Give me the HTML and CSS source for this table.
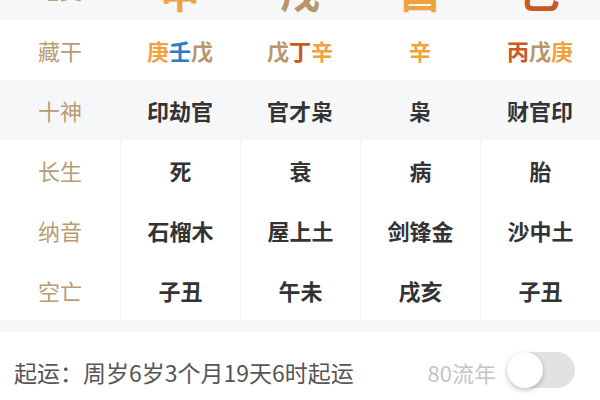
FILE: index.html
```html
<!DOCTYPE html>
<html lang="zh">
<head>
<meta charset="utf-8">
<link rel="stylesheet" href="styles.css">
</head>
<body>
<div class="page">
  <div class="row gray top">
    <div class="label">地支</div>
    <div class="cell big c-metal">申</div>
    <div class="cell big c-earth">戌</div>
    <div class="cell big c-metal">酉</div>
    <div class="cell big c-fire">巳</div>
  </div>
  <div class="row white">
    <div class="label">藏干</div>
    <div class="cell stems"><span class="c-metal">庚</span><span class="c-water">壬</span><span class="c-earth">戊</span></div>
    <div class="cell stems"><span class="c-earth">戊</span><span class="c-fire">丁</span><span class="c-metal">辛</span></div>
    <div class="cell stems"><span class="c-metal">辛</span></div>
    <div class="cell stems"><span class="c-fire">丙</span><span class="c-earth">戊</span><span class="c-metal">庚</span></div>
  </div>
  <div class="row gray">
    <div class="label">十神</div>
    <div class="cell">印劫官</div>
    <div class="cell">官才枭</div>
    <div class="cell">枭</div>
    <div class="cell">财官印</div>
  </div>
  <div class="block">
    <div class="row lined">
      <div class="label">长生</div>
      <div class="cell">死</div>
      <div class="cell">衰</div>
      <div class="cell">病</div>
      <div class="cell">胎</div>
    </div>
    <div class="row lined">
      <div class="label">纳音</div>
      <div class="cell">石榴木</div>
      <div class="cell">屋上土</div>
      <div class="cell">剑锋金</div>
      <div class="cell">沙中土</div>
    </div>
    <div class="row lined">
      <div class="label">空亡</div>
      <div class="cell">子丑</div>
      <div class="cell">午未</div>
      <div class="cell">戌亥</div>
      <div class="cell">子丑</div>
    </div>
  </div>
  <div class="divider"></div>
  <div class="footer">
    <div class="qiyun">起运：周岁6岁3个月19天6时起运</div>
    <div class="liunian">80流年</div>
    <div class="switch"><div class="knob"></div></div>
  </div>
</div>
</body>
</html>
```
FILE: styles.css
```css
html, body {
  margin: 0;
  padding: 0;
  background: #ffffff;
}
body {
  width: 600px;
  height: 400px;
  overflow: hidden;
  font-family: "Noto Sans CJK SC", "Noto Sans", sans-serif;
}
.page {
  margin-top: -40px;
}
.row {
  display: grid;
  grid-template-columns: repeat(5, 120px);
  height: 60px;
  align-items: center;
}
.gray {
  background: #f6f7f9;
}
.white {
  background: #ffffff;
}
.label {
  text-align: center;
  font-size: 22px;
  color: #b89c74;
  line-height: 1;
}
.top .label {
  margin-top: -2px;
}
.cell {
  text-align: center;
  font-size: 22px;
  font-weight: 700;
  color: #333333;
  line-height: 1;
}
.big {
  font-size: 40px;
  font-weight: 700;
  padding-top: 2px;
}
.c-metal { color: #f0a23c; }
.c-water { color: #2e7cc4; }
.c-earth { color: #b8966c; }
.c-fire { color: #c85a1e; }
.block {
  background: #ffffff;
}
.lined {
  align-items: stretch;
}
.lined .label,
.lined .cell {
  display: flex;
  align-items: center;
  justify-content: center;
}
.lined .cell {
  border-left: 1px solid #f2f3f5;
}
.divider {
  height: 12px;
  background: #f6f7f9;
}
.footer {
  display: flex;
  align-items: center;
  height: 80px;
  padding: 0 25px 0 14px;
}
.qiyun {
  flex: 1;
  font-size: 23px;
  color: #555555;
}
.liunian {
  font-size: 22px;
  color: #c4c4c4;
  margin-right: 11px;
}
.switch {
  width: 68px;
  height: 36px;
  margin-top: -4px;
  border-radius: 18px;
  background: #e2e2e2;
  position: relative;
}
.knob {
  position: absolute;
  left: 0;
  top: 0;
  width: 36px;
  height: 36px;
  border-radius: 50%;
  background: #ffffff;
  box-shadow: 0 2px 5px rgba(0,0,0,0.25);
}
```
